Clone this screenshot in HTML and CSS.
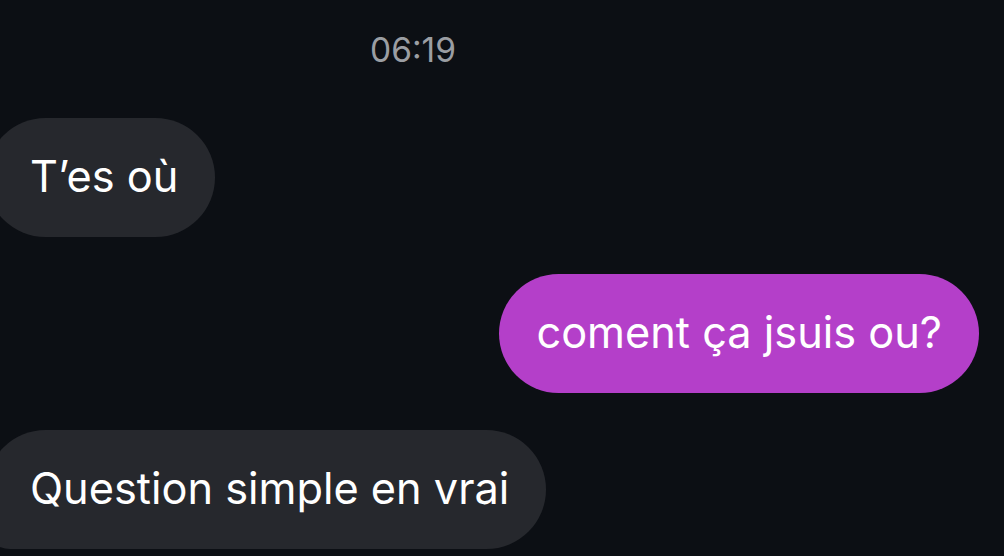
FILE: index.html
```html
<!DOCTYPE html>
<html lang="fr">

<head>
	<meta charset="UTF-8">
	<meta name="viewport" content="width=device-width, initial-scale=1.0">
	<title>Messages</title>
	<link rel="stylesheet" href="styles.css">
</head>

<body>
	<div class="chat">
		<div class="chat__time">06:19</div>

		<div class="msg msg--in">
			<div class="msg__bubble">T’es où</div>
		</div>

		<div class="msg msg--out">
			<div class="msg__bubble">coment ça jsuis ou?</div>
		</div>

		<div class="msg msg--in msg--last">
			<div class="msg__bubble">Question simple en vrai</div>
		</div>
	</div>
</body>

</html>
```

FILE: styles.css
```css
* {
	margin: 0;
	padding: 0;
	box-sizing: border-box;
}

body {
	background: #0c0f14;
	font-family: Inter, "Noto Sans", sans-serif;
	color: #fff;
	overflow: hidden;
}

.chat {
	display: flex;
	flex-direction: column;
	gap: 37px;
	padding: 30px 25px 0 0;
}

.chat__time {
	padding-left: 370px;
	font-size: 33.5px;
	line-height: 40px;
	color: #9b9ea3;
	margin-bottom: 11px;
}

.msg {
	display: flex;
}

.msg--out {
	justify-content: flex-end;
}

.msg__bubble {
	height: 119px;
	line-height: 117px;
	font-size: 43.3px;
	padding: 0 37px;
	border-radius: 60px;
	white-space: nowrap;
}

.msg--in .msg__bubble {
	background: #26282d;
	margin-left: -14px;
	padding-left: 44px;
}

.msg--out .msg__bubble {
	background: #b43fc9;
}

.msg--last .msg__bubble {
	border-bottom-left-radius: 24px;
}
```
